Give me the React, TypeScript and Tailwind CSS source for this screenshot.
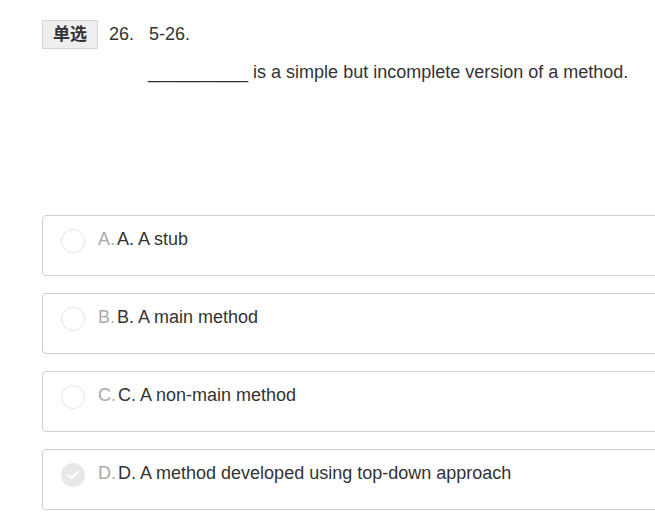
const options = [
  { key: "A", text: "A. A stub", checked: false },
  { key: "B", text: "B. A main method", checked: false },
  { key: "C", text: "C. A non-main method", checked: false },
  { key: "D", text: "D. A method developed using top-down approach", checked: true },
];

function Radio({ checked }: { checked: boolean }) {
  if (checked) {
    return (
      <span className="mt-[2px] flex h-6 w-6 shrink-0 items-center justify-center rounded-full bg-[#e8e8e8]">
        <svg width="14" height="14" viewBox="0 0 14 14" fill="none">
          <path d="M2 7.2 L5.5 10.3 L12 3.8" stroke="#fff" strokeWidth="2.2" strokeLinecap="round" strokeLinejoin="round" />
        </svg>
      </span>
    );
  }
  return <span className="mt-[2px] h-6 w-6 shrink-0 rounded-full border border-[#e3e3e3] bg-white" />;
}

export default function App() {
  return (
    <div className="h-[515px] w-[655px] overflow-hidden bg-white font-['Liberation_Sans','Noto_Sans_CJK_SC',sans-serif] text-[#333]">
      {/* question header */}
      <div className="flex items-center pl-[42px] pt-5">
        <span className="flex h-[29px] w-[56px] items-center justify-center border border-[#d4d4d4] bg-[#eeeeee] text-[17px] font-bold text-[#333]">
          单选
        </span>
        <span className="ml-[11px] text-[18px]">26.</span>
        <span className="ml-[15px] text-[18px]">5-26.</span>
      </div>
      <p className="mt-[11px] pl-[148px] text-[18px] leading-6">
        __________ is a simple but incomplete version of a method.
      </p>

      {/* options */}
      <div className="mt-[131px] flex w-[720px] flex-col gap-[17px] pl-[42px]">
        {options.map((o) => (
          <div
            key={o.key}
            className="flex h-[61px] items-start gap-[13px] rounded-[4px] border border-[#cfcfcf] px-[18px] pt-[11px]"
          >
            <Radio checked={o.checked} />
            <span className="text-[18px] leading-6">
              <span className="text-[#aaa]">{o.key}.</span>
              <span className="ml-[2px]">{o.text}</span>
            </span>
          </div>
        ))}
      </div>
    </div>
  );
}
